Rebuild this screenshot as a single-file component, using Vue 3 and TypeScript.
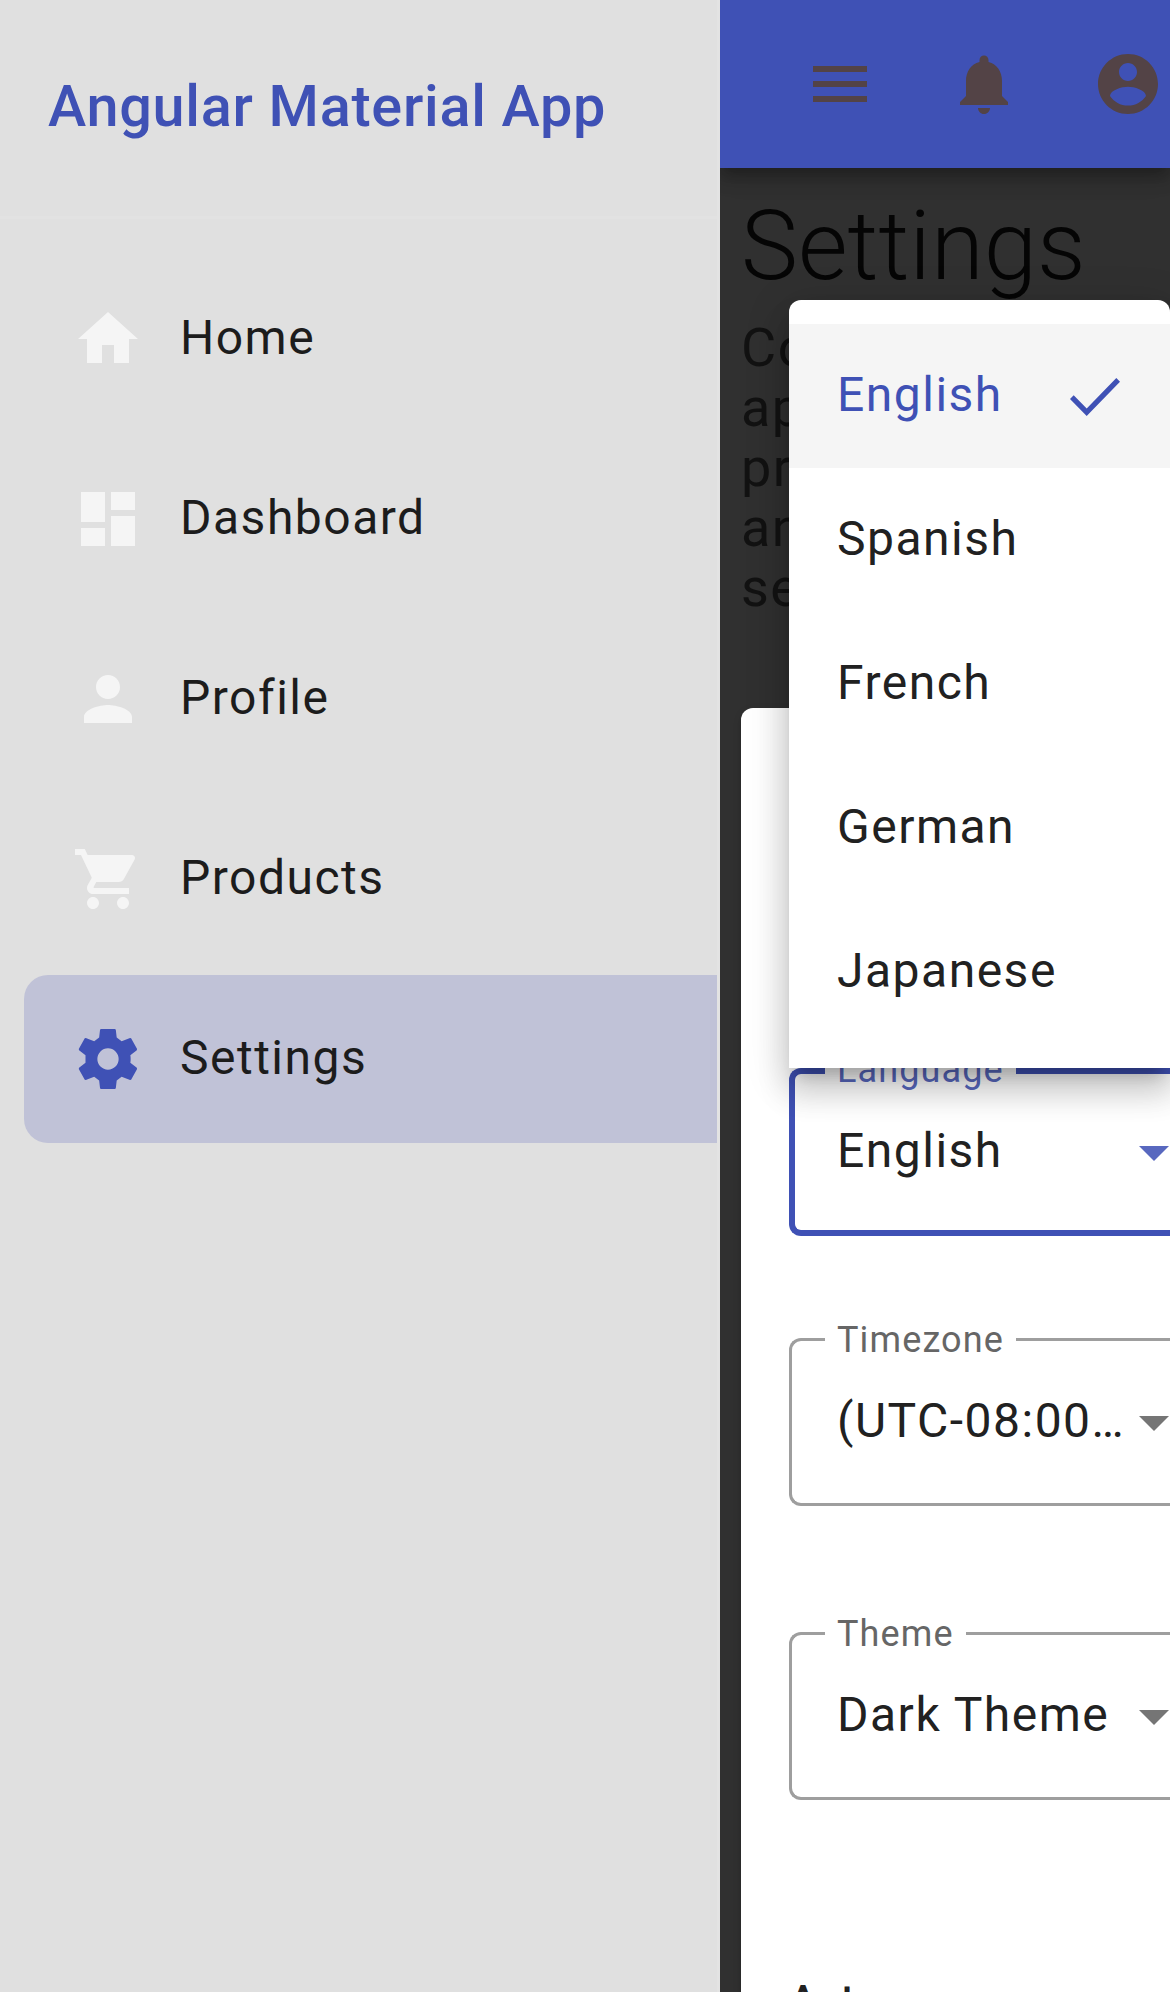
<script setup lang="ts">
interface NavItem {
  label: string
  icon: string
  active?: boolean
}

interface SelectField {
  label: string
  value: string
  focused?: boolean
}

const navItems: NavItem[] = [
  { label: 'Home', icon: 'M10 20v-6h4v6h5v-8h3L12 3 2 12h3v8z' },
  { label: 'Dashboard', icon: 'M3 13h8V3H3v10zm0 8h8v-6H3v6zm10 0h8V11h-8v10zm0-18v6h8V3h-8z' },
  {
    label: 'Profile',
    icon: 'M12 12c2.21 0 4-1.79 4-4s-1.79-4-4-4-4 1.79-4 4 1.79 4 4 4zm0 2c-2.67 0-8 1.34-8 4v2h16v-2c0-2.66-5.33-4-8-4z',
  },
  {
    label: 'Products',
    icon: 'M7 18c-1.1 0-1.99.9-1.99 2S5.9 22 7 22s2-.9 2-2-.9-2-2-2zM1 2v2h2l3.6 7.59-1.35 2.45c-.16.28-.25.61-.25.96 0 1.1.9 2 2 2h12v-2H7.42c-.14 0-.25-.11-.25-.25l.03-.12.9-1.63h7.45c.75 0 1.41-.41 1.75-1.03l3.58-6.49c.08-.14.12-.31.12-.48 0-.55-.45-1-1-1H5.21l-.94-2H1zm16 16c-1.1 0-1.99.9-1.99 2s.89 2 1.99 2 2-.9 2-2-.9-2-2-2z',
  },
  {
    label: 'Settings',
    icon: 'M9.6 2h4.75l.25.25.3 2.6 1.65 1.25 2.8-1.1.35.1 2 3.55-.1.4-2.15 1.7q.1.6.1 1.25t-.1 1.25l2.15 1.7.1.4-2 3.55-.35.1-2.8-1.1-1.65 1.25-.3 2.6-.25.25H9.6l-.25-.25-.3-2.6L7.4 17.9 4.6 19l-.35-.1-2-3.55.1-.4 2.15-1.7v-2.5L2.35 9.05l-.1-.4 2-3.55.35-.1 2.8 1.1 1.65-1.25.3-2.6zM12 8.45a3.55 3.55 0 1 0 0 7.1 3.55 3.55 0 0 0 0-7.1z',
    active: true,
  },
]

const toolbarIcons: string[] = [
  'M3 18h18v-2H3v2zm0-5h18v-2H3v2zm0-7v2h18V6H3z',
  'M12 22c1.1 0 2-.9 2-2h-4c0 1.1.89 2 2 2zm6-6v-5c0-3.07-1.64-5.64-4.5-6.32V4c0-.83-.67-1.5-1.5-1.5s-1.5.67-1.5 1.5v.68C7.63 5.36 6 7.92 6 11v5l-2 2v1h16v-1l-2-2z',
  'M12 2C6.48 2 2 6.48 2 12s4.48 10 10 10 10-4.48 10-10S17.52 2 12 2zm0 3c1.66 0 3 1.34 3 3s-1.34 3-3 3-3-1.34-3-3 1.34-3 3-3zm0 14.2c-2.5 0-4.71-1.28-6-3.22.03-1.99 4-3.08 6-3.08 1.99 0 5.97 1.09 6 3.08-1.29 1.94-3.5 3.22-6 3.22z',
]

const fields: SelectField[] = [
  { label: 'Language', value: 'English', focused: true },
  { label: 'Timezone', value: '(UTC-08:00) Pacific Time' },
  { label: 'Theme', value: 'Dark Theme' },
]

const languages: string[] = ['English', 'Spanish', 'French', 'German', 'Japanese']
const selectedLanguage = 'English'
</script>

<template>
  <div class="app">
    <aside class="sidenav">
      <header class="brand">Angular Material App</header>
      <nav class="nav">
        <a v-for="item in navItems" :key="item.label" class="nav-item" :class="{ active: item.active }">
          <svg class="icon" viewBox="0 0 24 24"><path :d="item.icon" fill-rule="evenodd" /></svg>
          <span class="nav-label">{{ item.label }}</span>
        </a>
      </nav>
    </aside>

    <div class="content">
      <header class="toolbar">
        <button v-for="icon in toolbarIcons" :key="icon" class="tool" type="button">
          <svg class="icon" viewBox="0 0 24 24"><path :d="icon" /></svg>
        </button>
      </header>

      <main class="page">
        <h1>Settings</h1>
        <p class="lead">Configure your application preferences and account settings</p>

        <section class="card">
          <div
            v-for="field in fields"
            :key="field.label"
            class="field"
            :class="{ focused: field.focused }"
          >
            <div class="outline">
              <span class="lead-edge"></span>
              <span class="notch"><label>{{ field.label }}</label></span>
              <span class="trail-edge"></span>
            </div>
            <div class="select">
              <span class="value">{{ field.value }}</span>
              <svg class="arrow" viewBox="0 0 10 5"><path d="M0 0h10L5 5z" /></svg>
            </div>
          </div>
          <h3>Auto-save</h3>
        </section>
      </main>

      <ul class="menu" role="listbox">
        <li
          v-for="language in languages"
          :key="language"
          class="option"
          :class="{ selected: language === selectedLanguage }"
        >
          <span>{{ language }}</span>
          <svg v-if="language === selectedLanguage" class="check" viewBox="0 0 50 38">
            <path d="M0 21l3.7-3.7L16.7 30.4 46.3 0 50 3.8 16.7 38z" />
          </svg>
        </li>
      </ul>
    </div>
  </div>
</template>

<style>
body {
  margin: 0;
  overflow: hidden;
}
</style>

<style scoped>
.app {
  display: flex;
  width: 1170px;
  height: 1992px;
  overflow: hidden;
  background: #303030;
  font-family: Roboto, sans-serif;
  font-size: 48px;
  letter-spacing: 1.5px;
  color: #212121;
}

.icon {
  display: block;
  flex: none;
  width: 72px;
  height: 72px;
  fill: currentColor;
}

.sidenav {
  flex: none;
  box-sizing: border-box;
  width: 720px;
  border-right: 3px solid #e3e3e3;
  background: #e0e0e0;
}

.brand {
  box-sizing: border-box;
  height: 219px;
  padding: 62px 48px 0;
  border-bottom: 3px solid #e2e2e2;
  color: #3f51b5;
  font-size: 57.6px;
  font-weight: 500;
  line-height: 90px;
  letter-spacing: 0.72px;
  white-space: nowrap;
}

.nav {
  display: flex;
  flex-direction: column;
  gap: 12px;
  padding: 36px 0 0 24px;
}

.nav-item {
  display: flex;
  align-items: center;
  gap: 36px;
  height: 168px;
  padding-left: 48px;
  border-radius: 24px 0 0 24px;
  color: #f5f5f5;
}

.nav-item.active {
  background: #c0c2d7;
  color: #3f51b5;
}

.nav-label {
  padding-bottom: 3px;
  line-height: 72px;
  color: #1c1c1c;
}

.content {
  position: relative;
  flex: 1;
  min-width: 0;
  overflow: hidden;
}

.toolbar {
  position: relative;
  display: flex;
  box-sizing: border-box;
  height: 168px;
  padding: 12px 0 12px 48px;
  background: #3f51b5;
  box-shadow: 0 6px 12px -3px rgba(0, 0, 0, 0.2), 0 12px 15px 0 rgba(0, 0, 0, 0.14),
    0 3px 30px 0 rgba(0, 0, 0, 0.12);
}

.tool {
  flex: none;
  display: grid;
  place-items: center;
  width: 144px;
  height: 144px;
  padding: 0;
  border: 0;
  background: none;
  color: #534346;
}

.page {
  padding: 0 0 0 21px;
}

h1 {
  margin: 0;
  padding-top: 18px;
  color: #050505;
  font-size: 96px;
  font-weight: 300;
  line-height: 120px;
  letter-spacing: 0;
}

.lead {
  width: 390px;
  margin: 12px 0 0;
  color: #121212;
  font-size: 54px;
  line-height: 60px;
}

.card {
  box-sizing: border-box;
  width: 600px;
  height: 1500px;
  margin-top: 90px;
  padding: 360px 48px 0;
  border-radius: 12px;
  background: #fff;
  box-shadow: 0 6px 3px -3px rgba(0, 0, 0, 0.2), 0 3px 3px 0 rgba(0, 0, 0, 0.14),
    0 3px 9px 0 rgba(0, 0, 0, 0.12);
}

.field {
  --line: #9e9e9e;
  --label: #666;
  --arrow: #757575;
  --stroke: 3px;
  display: grid;
  height: 168px;
}

.field.focused {
  --line: #3f51b5;
  --label: #5868bf;
  --arrow: #5868bf;
  --stroke: 6px;
}

.field + .field {
  margin-top: 102px;
}

.field + .field + .field {
  margin-top: 126px;
}

.outline,
.select {
  grid-area: 1 / 1;
  display: flex;
  min-width: 0;
}

.lead-edge,
.notch,
.trail-edge {
  box-sizing: border-box;
  border: var(--stroke) solid var(--line);
}

.lead-edge {
  width: 36px;
  border-right: 0;
  border-radius: 12px 0 0 12px;
}

.notch {
  border-width: 0 0 var(--stroke);
}

.trail-edge {
  flex: 1;
  border-left: 0;
  border-radius: 0 12px 12px 0;
}

.notch label {
  display: block;
  height: 48px;
  margin-top: -22px;
  padding: 0 12px;
  color: var(--label);
  font-size: 36px;
  line-height: 48px;
  letter-spacing: 1.125px;
}

.select {
  align-items: center;
  padding-left: 48px;
}

.value {
  width: 290px;
  padding-bottom: 3px;
  overflow: hidden;
  line-height: 72px;
  text-overflow: ellipsis;
  white-space: nowrap;
}

.arrow {
  width: 30px;
  height: 15px;
  margin-left: 12px;
  margin-top: 3px;
  fill: var(--arrow);
}

h3 {
  margin: 177px 0 0;
  font-size: 42px;
  font-weight: 500;
  line-height: 48px;
  letter-spacing: 0.4px;
}

/* Open select panel, floating over the page */
.menu {
  position: absolute;
  top: 300px;
  left: 69px;
  box-sizing: border-box;
  width: 381px;
  margin: 0;
  padding: 24px 0;
  border-radius: 12px 12px 0 0;
  background: #fff;
  list-style: none;
  box-shadow: 0 15px 15px -9px rgba(0, 0, 0, 0.2), 0 24px 30px 3px rgba(0, 0, 0, 0.14),
    0 9px 42px 6px rgba(0, 0, 0, 0.12);
}

.option {
  display: flex;
  align-items: center;
  justify-content: space-between;
  box-sizing: border-box;
  height: 144px;
  padding: 0 50px 3px 48px;
}

.option.selected {
  background: #f5f5f5;
  color: #3f51b5;
}

.check {
  width: 50px;
  height: 38px;
  margin-top: 4px;
  fill: currentColor;
}
</style>
